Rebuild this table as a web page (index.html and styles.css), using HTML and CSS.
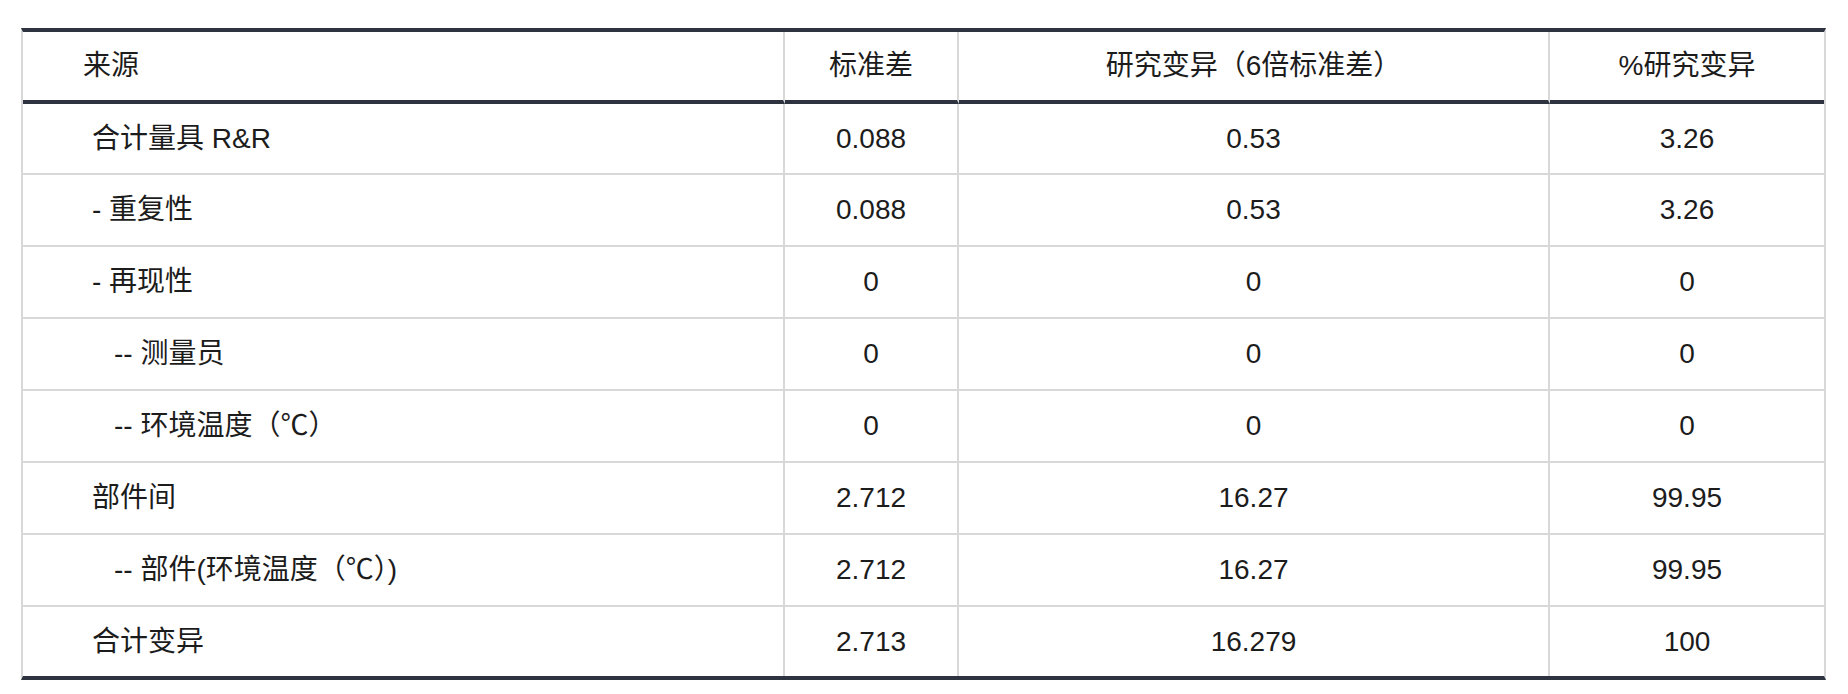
FILE: index.html
```html
<!DOCTYPE html>
<html lang="zh-CN">
<head>
<meta charset="utf-8">
<title>量具 R&amp;R 方差分量</title>
<link rel="stylesheet" href="styles.css">
</head>
<body>
<div class="page">
  <table class="grr">
    <thead>
      <tr>
        <th class="col-src">来源</th>
        <th class="col-sd">标准差</th>
        <th class="col-sv">研究变异（6倍标准差）</th>
        <th class="col-pct">%研究变异</th>
      </tr>
    </thead>
    <tbody>
      <tr>
        <td class="src">合计量具 R&amp;R</td>
        <td>0.088</td>
        <td>0.53</td>
        <td>3.26</td>
      </tr>
      <tr>
        <td class="src">- 重复性</td>
        <td>0.088</td>
        <td>0.53</td>
        <td>3.26</td>
      </tr>
      <tr>
        <td class="src">- 再现性</td>
        <td>0</td>
        <td>0</td>
        <td>0</td>
      </tr>
      <tr>
        <td class="src sub">-- 测量员</td>
        <td>0</td>
        <td>0</td>
        <td>0</td>
      </tr>
      <tr>
        <td class="src sub">-- 环境温度（℃）</td>
        <td>0</td>
        <td>0</td>
        <td>0</td>
      </tr>
      <tr>
        <td class="src">部件间</td>
        <td>2.712</td>
        <td>16.27</td>
        <td>99.95</td>
      </tr>
      <tr>
        <td class="src sub">-- 部件(环境温度（℃）)</td>
        <td>2.712</td>
        <td>16.27</td>
        <td>99.95</td>
      </tr>
      <tr>
        <td class="src">合计变异</td>
        <td>2.713</td>
        <td>16.279</td>
        <td>100</td>
      </tr>
    </tbody>
  </table>
</div>
</body>
</html>
```

FILE: styles.css
```css
html, body {
  margin: 0;
  padding: 0;
  background: #ffffff;
}

body {
  font-family: "Liberation Sans", "Noto Sans CJK SC", Arial, sans-serif;
  font-size: 28px;
  color: #1c1c1c;
}

.page {
  padding: 28px 22px 0 21px;
}

.grr {
  width: 1805px;
  table-layout: fixed;
  border-collapse: separate;
  border-spacing: 0;
  border-top: 4px solid #2d3440;
  border-bottom: 4px solid #2d3440;
  border-left: 2px solid #d8d8d8;
  border-right: 2px solid #d8d8d8;
}

.grr th,
.grr td {
  box-sizing: border-box;
  padding: 0 10px;
  border-right: 2px solid #d8d8d8;
  text-align: center;
  font-weight: normal;
  line-height: 1.2;
  white-space: nowrap;
}

.grr th:last-child,
.grr td:last-child {
  border-right: none;
}

.grr th {
  height: 72px;
  border-bottom: 4px solid #2d3440;
}

.grr td {
  height: 72px;
  border-bottom: 2px solid #d8d8d8;
}

.grr tbody tr:first-child td {
  height: 71px;
}

.grr tbody tr:last-child td {
  height: 69px;
  border-bottom: none;
}

.col-src { width: 762px; }
.col-sd { width: 174px; }
.col-sv { width: 591px; }
.col-pct { width: 274px; }

.grr th.col-src {
  text-align: left;
  padding-left: 60px;
}

.grr td.src {
  text-align: left;
  padding-left: 69px;
}

.grr td.src.sub {
  padding-left: 91px;
}
```
